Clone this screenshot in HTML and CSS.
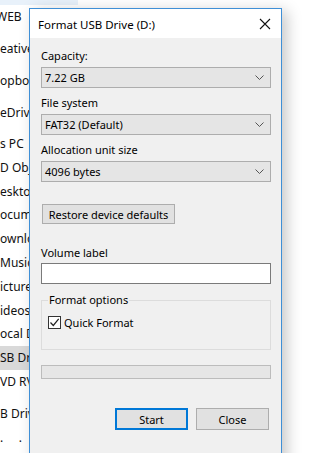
FILE: index.html
```html
<!DOCTYPE html>
<html lang="en">
<head>
    <meta charset="UTF-8">
    <meta name="viewport" content="width=device-width, initial-scale=1.0">
    <title>Format USB Drive (D:)</title>
    <link rel="stylesheet" href="styles.css">
</head>
<body>
    <div class="explorer">
        <div class="nav">
            <div class="nav-top"></div>
            <div class="nav-item quick shifted">WEB</div>
            <div class="nav-item quick">eative</div>
            <div class="nav-item quick">opbox</div>
            <div class="nav-item quick">eDriv</div>
            <div class="nav-item pc">s PC</div>
            <div class="nav-item">D Obj</div>
            <div class="nav-item">eskto</div>
            <div class="nav-item">ocum</div>
            <div class="nav-item">ownlo</div>
            <div class="nav-item">Music</div>
            <div class="nav-item">icture</div>
            <div class="nav-item">ideos</div>
            <div class="nav-item">ocal D</div>
            <div class="nav-item selected">SB Dr</div>
            <div class="nav-item">VD RV</div>
            <div class="nav-item usb">B Driv</div>
            <div class="nav-item">. &nbsp; &nbsp; .</div>
        </div>
    </div>

    <div class="dialog">
        <div class="titlebar">
            <span class="title">Format USB Drive (D:)</span>
            <svg class="close" width="12" height="12" viewBox="0 0 12 12">
                <path d="M1 1 L11 11 M11 1 L1 11" stroke="#111" stroke-width="1.1" fill="none"/>
            </svg>
        </div>
        <div class="content">
            <label class="field-label first">Capacity:</label>
            <div class="combo"><span>7.22 GB</span><svg class="chevron" width="9" height="5" viewBox="0 0 9 5"><path d="M0.5 0.5 L4.5 4.5 L8.5 0.5" stroke="#555" fill="none"/></svg></div>

            <label class="field-label">File system</label>
            <div class="combo"><span>FAT32 (Default)</span><svg class="chevron" width="9" height="5" viewBox="0 0 9 5"><path d="M0.5 0.5 L4.5 4.5 L8.5 0.5" stroke="#555" fill="none"/></svg></div>

            <label class="field-label">Allocation unit size</label>
            <div class="combo"><span>4096 bytes</span><svg class="chevron" width="9" height="5" viewBox="0 0 9 5"><path d="M0.5 0.5 L4.5 4.5 L8.5 0.5" stroke="#555" fill="none"/></svg></div>

            <button class="btn restore">Restore device defaults</button>

            <label class="field-label volume">Volume label</label>
            <div class="textbox"></div>

            <fieldset class="options">
                <legend>Format options</legend>
                <div class="check-row">
                    <span class="checkbox">
                        <svg width="11" height="11" viewBox="0 0 11 11"><path d="M1.5 5.5 L4.3 8.5 L9.7 1.8" stroke="#222" stroke-width="1.2" fill="none"/></svg>
                    </span>
                    <span>Quick Format</span>
                </div>
            </fieldset>

            <div class="progress"></div>

            <div class="actions">
                <button class="btn default">Start</button>
                <button class="btn">Close</button>
            </div>
        </div>
    </div>
</body>
</html>
```

FILE: styles.css
```css
body {
    margin: 0;
    width: 310px;
    height: 453px;
    overflow: hidden;
    background: #fff;
    font-family: "Noto Sans", "Open Sans", sans-serif;
    font-size: 11px;
    color: #000;
    position: relative;
}
.explorer {
    display: flex;
    height: 100%;
}
.nav {
    width: 95px;
    overflow: hidden;
    position: relative;
}
.nav-top {
    height: 5px;
    width: 78px;
    background: #e8f1fa;
}
.nav-item {
    height: 23.8px;
    line-height: 23.8px;
    font-size: 12px;
    white-space: nowrap;
    color: #111;
}
.nav-item.quick {
    height: 23px;
    line-height: 23px;
    margin-bottom: 9px;
}
.nav-item.quick:first-of-type {
    margin-top: 1px;
}
.nav-item.shifted {
    text-indent: -4px;
}
.nav-item.pc {
    margin-top: -1px;
}
.nav-item.selected {
    background: #d9d9d9;
}
.nav-item.usb {
    margin-top: 8px;
}
.dialog {
    position: absolute;
    left: 29px;
    top: 8px;
    width: 251px;
    height: 460px;
    border: 1px solid #3f8fd6;
    background: #f0f0f0;
    box-shadow: 5px 3px 14px rgba(0, 0, 0, 0.22);
}
.titlebar {
    height: 29px;
    background: #fff;
    display: flex;
    align-items: center;
    justify-content: space-between;
    padding: 0 10px 0 8px;
}
.title {
    font-size: 11.5px;
    margin-top: 1px;
}
.content {
    display: flex;
    flex-direction: column;
    padding: 0 10px 0 11px;
}
.field-label {
    display: block;
    line-height: 16px;
    margin-top: 7px;
}
.field-label.first {
    margin-top: 10px;
}
.field-label.volume {
    margin-top: 21px;
}
.combo {
    margin-top: 3px;
    height: 19px;
    border: 1px solid #adadad;
    background: #e5e5e5;
    display: flex;
    align-items: center;
    justify-content: space-between;
    padding: 0 5px 0 3px;
}
.chevron {
    margin-right: 1px;
}
.btn {
    font-family: inherit;
    font-size: 11px;
    color: #000;
    background: #e1e1e1;
    border: 1px solid #adadad;
    border-radius: 0;
    padding: 0;
    cursor: default;
}
.restore {
    align-self: flex-start;
    margin: 22px 0 0 1px;
    width: 133px;
    height: 20px;
}
.textbox {
    margin-top: 2px;
    height: 19px;
    border: 1px solid #7a7a7a;
    background: #fff;
}
.options {
    margin: 8px 0 0;
    padding: 0 6px;
    height: 56px;
    border: 1px solid #dcdcdc;
    min-width: 0;
}
.options legend {
    padding: 0 1px;
    line-height: 16px;
}
.check-row {
    display: flex;
    align-items: center;
    gap: 3px;
    margin-top: 7px;
}
.checkbox {
    width: 11px;
    height: 11px;
    border: 1px solid #333;
    background: #fff;
    display: flex;
}
.progress {
    margin-top: 15px;
    height: 12px;
    border: 1px solid #bcbcbc;
    background: #e6e6e6;
}
.actions {
    display: flex;
    justify-content: flex-end;
    gap: 8px;
    margin: 29px 2px 0 0;
}
.actions .btn {
    width: 73px;
    height: 22px;
}
.actions .btn.default {
    border: 2px solid #0078d7;
}
```
